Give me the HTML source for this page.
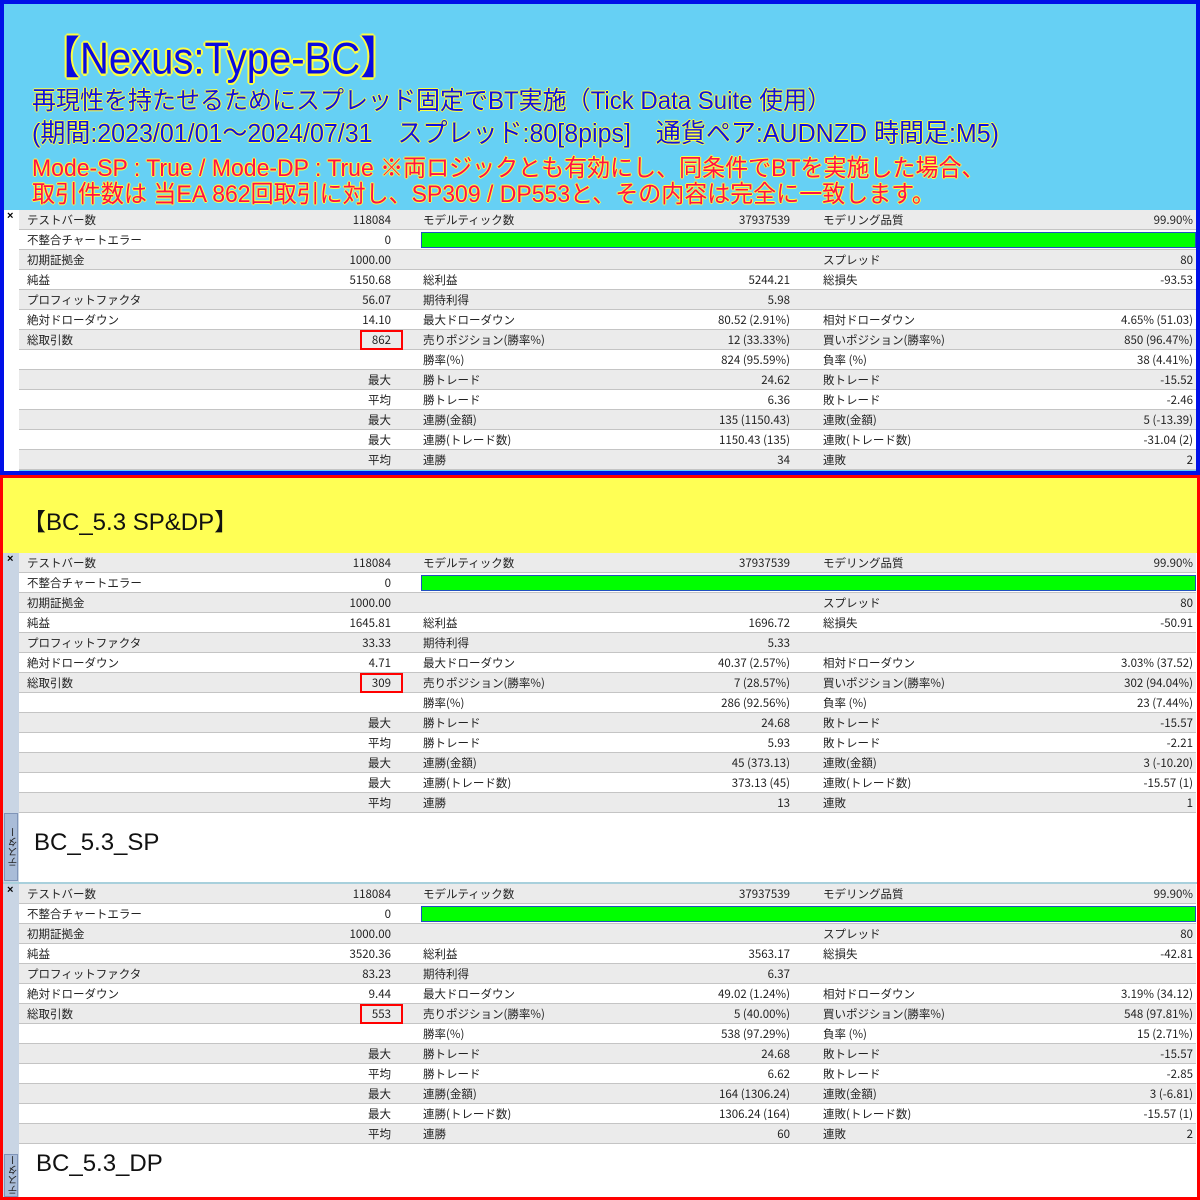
<!DOCTYPE html>
<html><head><meta charset="utf-8">
<style>
*{margin:0;padding:0;box-sizing:border-box}
body{width:1200px;height:1200px;position:relative;background:#fff;font-family:"Liberation Sans","Noto Sans CJK JP",sans-serif;overflow:hidden}
.abs{position:absolute}
.top{left:0;top:0;width:1200px;height:475px;border:4px solid #0010e8;background:#66d0f4}
.bot{left:0;top:475px;width:1200px;height:725px;border:3px solid #ff0000;border-top-width:3px}
.t1{left:40px;top:22px;font-size:40px;color:#0a0ae0;white-space:nowrap;transform:scaleY(1.12);transform-origin:left top;
 text-shadow:-2px 0 #ffff40,2px 0 #ffff40,0 -2px #ffff40,0 2px #ffff40,-1px -1px #ffff40,1px 1px #ffff40,-1px 1px #ffff40,1px -1px #ffff40}
.l{white-space:nowrap;left:32px;line-height:1.1;transform:scaleY(1.05);transform-origin:left top;
 text-shadow:-1px 0 #ffff40,1px 0 #ffff40,0 -1px #ffff40,0 1px #ffff40}
.blue{color:#1010e0}.red{color:#ff1048}
.tbl{left:19px;width:1177px;font-size:11.5px;color:#222;font-family:"Noto Sans CJK JP","Liberation Sans",sans-serif}
.r{position:relative;height:20px;border-bottom:1px solid #c4c4c4;background:#fff}
.r.g{background:#ebebeb}
.r span{position:absolute;top:0;line-height:21px;white-space:nowrap}
.a{left:8px}.b{right:805px}.c{left:404px}.d{right:406px}.e{left:804px}.f{right:3px}
.bar{position:absolute;left:402px;top:2px;width:775px;height:16px;background:#00ff00;border:1px solid #2050c0}
.box{position:absolute;left:341px;top:0;width:43px;height:20px;border:2px solid #ff0000}
.side{left:3px;width:16px;background:#fff}
.x{position:absolute;left:4px;top:0;font-size:11px;font-weight:bold;color:#000}
.tab{position:absolute;left:1px;width:14px;background:#a9bcd8;border:1px solid #7f94b8;font-size:10px;writing-mode:vertical-rl;transform:rotate(180deg);text-align:center;color:#222;font-family:"Noto Sans CJK JP",sans-serif}
.big{font-size:24px;color:#111}
</style></head><body>
<div class="abs top"></div>
<div class="abs t1">【Nexus:Type-BC】</div>
<div class="abs l blue" style="top:88px;font-size:24px">再現性を持たせるためにスプレッド固定でBT実施（Tick Data Suite 使用）</div>
<div class="abs l blue" style="top:120px;font-size:25px">(期間:2023/01/01～2024/07/31　スプレッド:80[8pips]　通貨ペア:AUDNZD 時間足:M5)</div>
<div class="abs l red" style="top:155px;font-size:23px">Mode-SP : True / Mode-DP :  True ※両ロジックとも有効にし、同条件でBTを実施した場合、</div>
<div class="abs l red" style="top:181px;font-size:23px">取引件数は 当EA 862回取引に対し、SP309 / DP553と、その内容は完全に一致します。</div>

<div class="abs side" style="top:210px;height:262px"><span class="x">×</span></div>
<div class="abs tbl" style="top:210px">
<div class="r g"><span class="a">テストバー数</span><span class="b">118084</span><span class="c">モデルティック数</span><span class="d">37937539</span><span class="e">モデリング品質</span><span class="f">99.90%</span></div>
<div class="r"><span class="a">不整合チャートエラー</span><span class="b">0</span><div class="bar"></div></div>
<div class="r g"><span class="a">初期証拠金</span><span class="b">1000.00</span><span class="e">スプレッド</span><span class="f">80</span></div>
<div class="r"><span class="a">純益</span><span class="b">5150.68</span><span class="c">総利益</span><span class="d">5244.21</span><span class="e">総損失</span><span class="f">-93.53</span></div>
<div class="r g"><span class="a">プロフィットファクタ</span><span class="b">56.07</span><span class="c">期待利得</span><span class="d">5.98</span></div>
<div class="r"><span class="a">絶対ドローダウン</span><span class="b">14.10</span><span class="c">最大ドローダウン</span><span class="d">80.52 (2.91%)</span><span class="e">相対ドローダウン</span><span class="f">4.65% (51.03)</span></div>
<div class="r g"><span class="a">総取引数</span><div class="box"></div><span class="b">862</span><span class="c">売りポジション(勝率%)</span><span class="d">12 (33.33%)</span><span class="e">買いポジション(勝率%)</span><span class="f">850 (96.47%)</span></div>
<div class="r"><span class="c">勝率(%)</span><span class="d">824 (95.59%)</span><span class="e">負率 (%)</span><span class="f">38 (4.41%)</span></div>
<div class="r g"><span class="b">最大</span><span class="c">勝トレード</span><span class="d">24.62</span><span class="e">敗トレード</span><span class="f">-15.52</span></div>
<div class="r"><span class="b">平均</span><span class="c">勝トレード</span><span class="d">6.36</span><span class="e">敗トレード</span><span class="f">-2.46</span></div>
<div class="r g"><span class="b">最大</span><span class="c">連勝(金額)</span><span class="d">135 (1150.43)</span><span class="e">連敗(金額)</span><span class="f">5 (-13.39)</span></div>
<div class="r"><span class="b">最大</span><span class="c">連勝(トレード数)</span><span class="d">1150.43 (135)</span><span class="e">連敗(トレード数)</span><span class="f">-31.04 (2)</span></div>
<div class="r g"><span class="b">平均</span><span class="c">連勝</span><span class="d">34</span><span class="e">連敗</span><span class="f">2</span></div>
</div>
<div class="abs top" style="background:transparent"></div>

<div class="abs bot"></div>
<div class="abs" style="left:3px;top:478px;width:1194px;height:75px;background:#ffff55"></div>
<div class="abs big" style="left:22px;top:502px">【BC_5.3 SP&amp;DP】</div>

<div class="abs side" style="top:553px;height:330px;background:#c9d5e4"><span class="x">×</span><div class="tab" style="top:260px;height:68px">テスター</div></div>
<div class="abs tbl" style="top:553px">
<div class="r g"><span class="a">テストバー数</span><span class="b">118084</span><span class="c">モデルティック数</span><span class="d">37937539</span><span class="e">モデリング品質</span><span class="f">99.90%</span></div>
<div class="r"><span class="a">不整合チャートエラー</span><span class="b">0</span><div class="bar"></div></div>
<div class="r g"><span class="a">初期証拠金</span><span class="b">1000.00</span><span class="e">スプレッド</span><span class="f">80</span></div>
<div class="r"><span class="a">純益</span><span class="b">1645.81</span><span class="c">総利益</span><span class="d">1696.72</span><span class="e">総損失</span><span class="f">-50.91</span></div>
<div class="r g"><span class="a">プロフィットファクタ</span><span class="b">33.33</span><span class="c">期待利得</span><span class="d">5.33</span></div>
<div class="r"><span class="a">絶対ドローダウン</span><span class="b">4.71</span><span class="c">最大ドローダウン</span><span class="d">40.37 (2.57%)</span><span class="e">相対ドローダウン</span><span class="f">3.03% (37.52)</span></div>
<div class="r g"><span class="a">総取引数</span><div class="box"></div><span class="b">309</span><span class="c">売りポジション(勝率%)</span><span class="d">7 (28.57%)</span><span class="e">買いポジション(勝率%)</span><span class="f">302 (94.04%)</span></div>
<div class="r"><span class="c">勝率(%)</span><span class="d">286 (92.56%)</span><span class="e">負率 (%)</span><span class="f">23 (7.44%)</span></div>
<div class="r g"><span class="b">最大</span><span class="c">勝トレード</span><span class="d">24.68</span><span class="e">敗トレード</span><span class="f">-15.57</span></div>
<div class="r"><span class="b">平均</span><span class="c">勝トレード</span><span class="d">5.93</span><span class="e">敗トレード</span><span class="f">-2.21</span></div>
<div class="r g"><span class="b">最大</span><span class="c">連勝(金額)</span><span class="d">45 (373.13)</span><span class="e">連敗(金額)</span><span class="f">3 (-10.20)</span></div>
<div class="r"><span class="b">最大</span><span class="c">連勝(トレード数)</span><span class="d">373.13 (45)</span><span class="e">連敗(トレード数)</span><span class="f">-15.57 (1)</span></div>
<div class="r g"><span class="b">平均</span><span class="c">連勝</span><span class="d">13</span><span class="e">連敗</span><span class="f">1</span></div>
</div>
<div class="abs big" style="left:34px;top:829px">BC_5.3_SP</div>
<div class="abs" style="left:3px;top:882px;width:1194px;height:2px;background:#a8d0dc"></div>

<div class="abs side" style="top:884px;height:313px;background:#c9d5e4"><span class="x">×</span><div class="tab" style="top:270px;height:43px">テスター</div></div>
<div class="abs tbl" style="top:884px">
<div class="r g"><span class="a">テストバー数</span><span class="b">118084</span><span class="c">モデルティック数</span><span class="d">37937539</span><span class="e">モデリング品質</span><span class="f">99.90%</span></div>
<div class="r"><span class="a">不整合チャートエラー</span><span class="b">0</span><div class="bar"></div></div>
<div class="r g"><span class="a">初期証拠金</span><span class="b">1000.00</span><span class="e">スプレッド</span><span class="f">80</span></div>
<div class="r"><span class="a">純益</span><span class="b">3520.36</span><span class="c">総利益</span><span class="d">3563.17</span><span class="e">総損失</span><span class="f">-42.81</span></div>
<div class="r g"><span class="a">プロフィットファクタ</span><span class="b">83.23</span><span class="c">期待利得</span><span class="d">6.37</span></div>
<div class="r"><span class="a">絶対ドローダウン</span><span class="b">9.44</span><span class="c">最大ドローダウン</span><span class="d">49.02 (1.24%)</span><span class="e">相対ドローダウン</span><span class="f">3.19% (34.12)</span></div>
<div class="r g"><span class="a">総取引数</span><div class="box"></div><span class="b">553</span><span class="c">売りポジション(勝率%)</span><span class="d">5 (40.00%)</span><span class="e">買いポジション(勝率%)</span><span class="f">548 (97.81%)</span></div>
<div class="r"><span class="c">勝率(%)</span><span class="d">538 (97.29%)</span><span class="e">負率 (%)</span><span class="f">15 (2.71%)</span></div>
<div class="r g"><span class="b">最大</span><span class="c">勝トレード</span><span class="d">24.68</span><span class="e">敗トレード</span><span class="f">-15.57</span></div>
<div class="r"><span class="b">平均</span><span class="c">勝トレード</span><span class="d">6.62</span><span class="e">敗トレード</span><span class="f">-2.85</span></div>
<div class="r g"><span class="b">最大</span><span class="c">連勝(金額)</span><span class="d">164 (1306.24)</span><span class="e">連敗(金額)</span><span class="f">3 (-6.81)</span></div>
<div class="r"><span class="b">最大</span><span class="c">連勝(トレード数)</span><span class="d">1306.24 (164)</span><span class="e">連敗(トレード数)</span><span class="f">-15.57 (1)</span></div>
<div class="r g"><span class="b">平均</span><span class="c">連勝</span><span class="d">60</span><span class="e">連敗</span><span class="f">2</span></div>
</div>
<div class="abs big" style="left:36px;top:1150px">BC_5.3_DP</div>
<div class="abs bot" style="background:transparent"></div>
</body></html>
